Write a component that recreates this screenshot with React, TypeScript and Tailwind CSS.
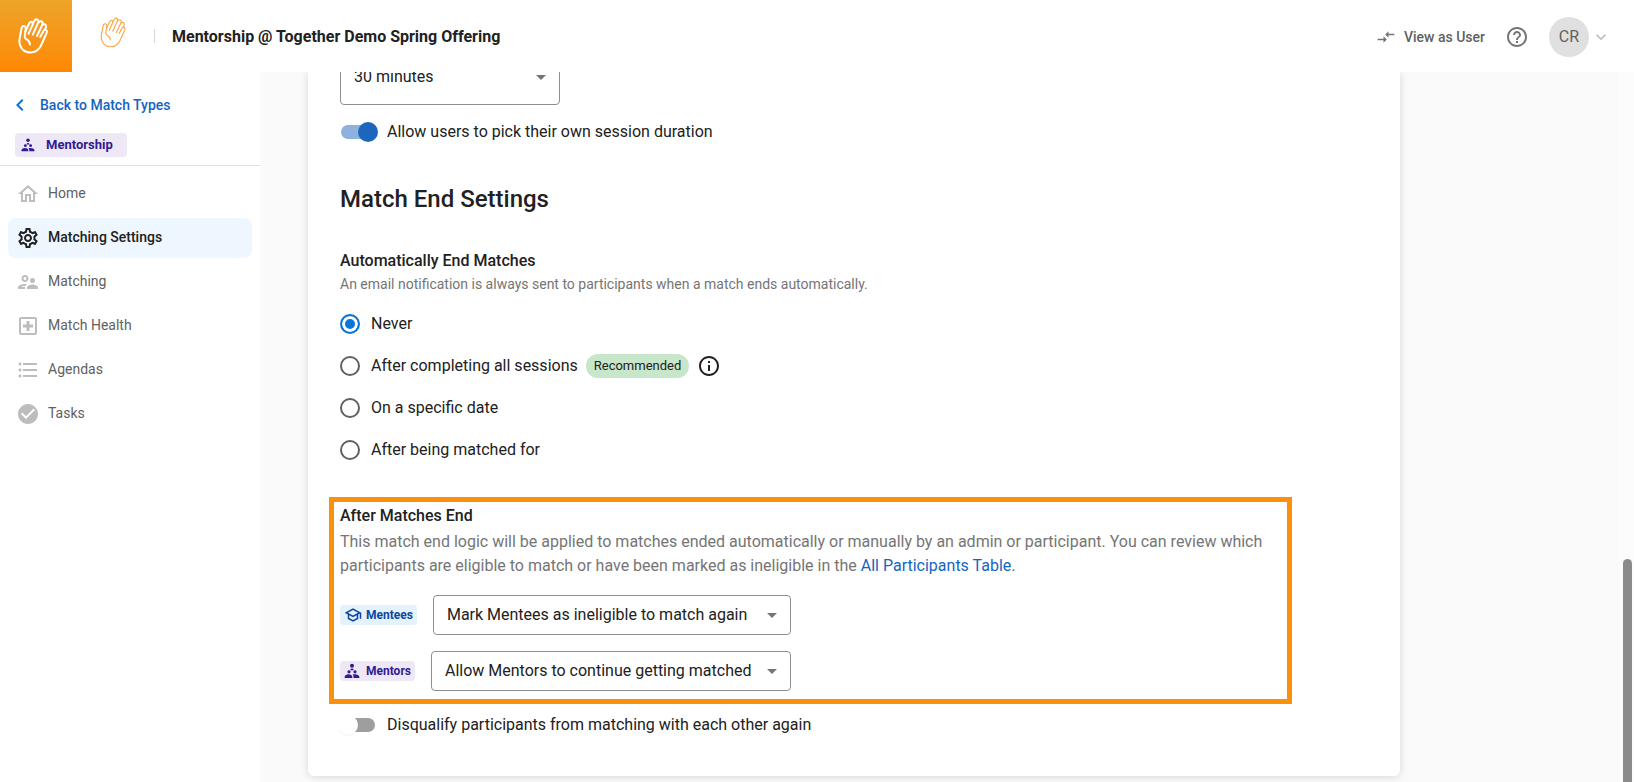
import React from "react";
import {
    MdArrowDropDown,
    MdCheckCircle,
    MdChevronLeft,
    MdCompareArrows,
    MdFormatListBulleted,
    MdHelpOutline,
    MdInfoOutline,
    MdKeyboardArrowDown,
    MdOutlineHome,
    MdOutlineLocalHospital,
    MdOutlineSchool,
    MdOutlineSettings,
    MdOutlineSupervisorAccount,
} from "react-icons/md";

const NAV = [
    { label: "Home", icon: MdOutlineHome },
    { label: "Matching Settings", icon: MdOutlineSettings, active: true },
    { label: "Matching", icon: MdOutlineSupervisorAccount },
    { label: "Match Health", icon: MdOutlineLocalHospital },
    { label: "Agendas", icon: MdFormatListBulleted },
    { label: "Tasks", icon: MdCheckCircle },
];

function HandIcon({ className, stroke }: { className: string; stroke: number }) {
    return (
        <svg
            viewBox="0 0 30 36"
            className={className}
            fill="none"
            stroke="currentColor"
            strokeWidth={stroke}
            strokeLinecap="round"
            strokeLinejoin="round"
        >
            <path d="M12 26.500C11.700 23.800 10.300 22.200 8.300 21.200C7 20.500 6.600 19.600 6.800 18.200L7.700 10.600C7.800 8.800 7.100 7.900 5.900 7.900C4.700 7.900 3.900 8.700 3.600 10.200L1.700 20C.2 28 4.600 34.300 12 34.500C17 34.600 20.800 32 23 27.500L28.600 15C29.200 13.500 28.900 12.400 27.900 12C26.900 11.600 25.900 12 25.300 13.200L22.300 18.800" />
            <path d="M7.500 13.500L11.300 5.200C11.900 4 12.900 3.600 13.900 4C14.900 4.500 15.200 5.400 14.700 6.600L10.500 15.800" />
            <path d="M14.700 5.800L16.400 2.800C17.100 1.500 18.300 1.100 19.400 1.600C20.500 2.100 20.800 3.200 20.200 4.500L14.800 16.600" />
            <path d="M20.400 4.600C21.400 3.400 22.700 3 23.700 3.500C24.800 4.100 25 5.200 24.400 6.500L19 18" />
            <path d="M24.600 6.600C25.800 6 27 6.100 27.700 6.900C28.300 7.600 28.300 8.500 27.900 9.500L26.600 12" />
        </svg>
    );
}

function MentorIcon({ className }: { className: string }) {
    return (
        <svg viewBox="0 0 24 24" className={className} fill="currentColor">
            <circle cx="12" cy="4" r="3" />
            <circle cx="7.500" cy="13.200" r="2.400" />
            <circle cx="16.500" cy="13.200" r="2.400" />
            <path d="M9.500 11c0-1.600 1-2.600 2.500-2.600s2.500 1 2.500 2.600z" />
            <path d="M1 22.500v-1.500c0-2.500 3-4 5.800-4s5.700 1.500 5.700 4v1.500z" />
            <path d="M14.300 22.500v-1.500c0-1.500-.6-2.700-1.500-3.600.9-.3 2.300-.4 3.500-.4 3 0 6.700 1.500 6.700 4v1.500z" />
        </svg>
    );
}

function Header() {
    return (
        <header className="flex h-[72px] shrink-0 items-center bg-white pr-[23px]">
            <a
                href="#"
                aria-label="Together"
                className="flex size-[72px] items-center justify-center bg-linear-to-b from-[#eca427] to-[#ff8800] pr-1.5 text-white"
            >
                <HandIcon className="h-9 w-[30px]" stroke={2} />
            </a>
            <HandIcon className="mb-2 ml-7 h-[31px] w-[26px] text-[#f9a545]" stroke={1.3} />
            <div className="ml-7 h-3.5 w-px bg-[#d9d9d9]" />
            <h1 className="ml-[17px] pt-0.5 text-base font-bold">Mentorship @ Together Demo Spring Offering</h1>

            <div className="ml-auto flex items-center pt-0.5 text-[#616161]">
                <button className="flex items-center gap-2 text-sm font-medium">
                    <MdCompareArrows className="size-5 text-[#757575]" />
                    View as User
                </button>
                <button aria-label="Help" className="ml-5 text-[#757575]">
                    <MdHelpOutline className="size-6" />
                </button>
                <button className="ml-5 flex items-center gap-0.5">
                    <span className="flex size-10 items-center justify-center rounded-full bg-[#e0e0e0]">CR</span>
                    <MdKeyboardArrowDown className="size-5 text-[#bdbdbd]" />
                </button>
            </div>
        </header>
    );
}

function Sidebar() {
    return (
        <aside className="w-[260px] shrink-0 bg-white">
            <div className="flex h-[94px] flex-col items-start border-b border-[#e0e0e0] pt-[21px]">
                <a href="#" className="flex items-center gap-2 pl-2 text-sm font-medium text-[#1565c0]">
                    <MdChevronLeft className="size-6 text-[#0876d8]" />
                    Back to Match Types
                </a>
                <div className="mt-4 ml-[15px] flex h-6 items-center gap-[11px] rounded-sm bg-[#ede7f6] px-1.5 pr-3.5 text-[13px] font-bold text-[#311b92]">
                    <MentorIcon className="size-3.5" />
                    Mentorship
                </div>
            </div>
            <nav className="flex flex-col gap-1 px-2 pt-2 text-sm text-[#616161]">
                {NAV.map(({ label, icon: Icon, active }) => (
                    <a
                        key={label}
                        href="#"
                        className={
                            active
                                ? "flex h-10 items-center gap-2 rounded-lg bg-[#eef7ff] px-2 font-medium text-[#212121]"
                                : "flex h-10 items-center gap-2 rounded-lg px-2"
                        }
                    >
                        <Icon className={active ? "size-6" : "size-6 text-[#bdbdbd]"} />
                        <span className="pb-0.5">{label}</span>
                    </a>
                ))}
            </nav>
        </aside>
    );
}

type SelectProps = {
    label: string;
    value: string;
    className: string;
};

function Select({ label, value, className }: SelectProps) {
    return (
        <div className={`relative ${className}`}>
            <select
                aria-label={label}
                className="h-full w-full appearance-none rounded-sm border border-[#8e8e8e] bg-white pr-8 pl-[13px]"
            >
                <option>{value}</option>
            </select>
            <MdArrowDropDown className="pointer-events-none absolute inset-y-0 right-[7px] my-auto size-6 text-[#757575]" />
        </div>
    );
}

function Toggle({ label, checked }: { label: string; checked?: boolean }) {
    return (
        <label className="flex h-6 items-center gap-2">
            <span className="relative flex h-5 w-[39px] items-center">
                <input
                    type="checkbox"
                    role="switch"
                    defaultChecked={checked}
                    className="peer ml-px h-3.5 w-[34px] appearance-none rounded-full bg-[#9e9e9e] checked:bg-[#8fb1de]"
                />
                <span className="pointer-events-none absolute -left-0.5 size-5 rounded-full bg-white shadow-2xs peer-checked:left-[18px] peer-checked:bg-[#1c67bd] peer-checked:shadow-none" />
            </span>
            {label}
        </label>
    );
}

function Radio({ label, checked, children }: { label: string; checked?: boolean; children?: React.ReactNode }) {
    return (
        <div className="flex h-[42px] items-center">
            <label className="flex items-center gap-[11px]">
                <input
                    type="radio"
                    name="match-end"
                    defaultChecked={checked}
                    className="size-5 appearance-none rounded-full border-2 border-[#616161] bg-white checked:border-[#0876d8] checked:bg-[#0876d8] checked:shadow-[inset_0_0_0_3px_white]"
                />
                {label}
            </label>
            {children}
        </div>
    );
}

function MatchSettings() {
    return (
        <section className="max-w-[1092px] grow rounded-b-md bg-white px-8 pb-[39px] shadow-[0_1px_8px_rgba(0,0,0,0.14)]">
            {/* scrolled under the header */}
            <Select label="Session duration" value="30 minutes" className="-mt-6 h-[57px] w-[220px]" />
            <div className="mt-[15px]">
                <Toggle label="Allow users to pick their own session duration" checked />
            </div>

            <h2 className="mt-[39px] text-2xl font-medium">Match End Settings</h2>

            <h3 className="mt-[35px] leading-[22px] font-medium">Automatically End Matches</h3>
            <p className="text-sm leading-6 text-[#757575]">
                An email notification is always sent to participants when a match ends automatically.
            </p>
            <div className="mt-[7px]">
                <Radio label="Never" checked />
                <Radio label="After completing all sessions">
                    <span className="ml-2 flex h-6 items-center rounded-full bg-[#c8e6c9] px-2 text-[13px]">
                        Recommended
                    </span>
                    <MdInfoOutline className="ml-2 size-6" />
                </Radio>
                <Radio label="On a specific date" />
                <Radio label="After being matched for" />
            </div>

            <div className="mt-[26px] -ml-[11px] max-w-[963px] border-5 border-[#fb900a] px-1.5 pt-0.5 pb-2">
                <h3 className="font-medium">After Matches End</h3>
                <p className="mt-0.5 text-[#757575]">
                    This match end logic will be applied to matches ended automatically or manually by an admin or
                    participant. You can review which participants are eligible to match or have been marked as
                    ineligible in the{" "}
                    <a href="#" className="text-[#1565c0]">
                        All Participants Table.
                    </a>
                </p>
                <div className="mt-[17px] flex w-[451px] flex-col gap-4">
                    <div className="flex items-center gap-4">
                        <span className="flex h-5 items-center gap-1 rounded-sm bg-[#e3f2fd] px-1 text-xs font-bold text-[#0d47a1]">
                            <MdOutlineSchool className="size-[18px]" />
                            Mentees
                        </span>
                        <Select
                            label="Mentees"
                            value="Mark Mentees as ineligible to match again"
                            className="h-10 grow"
                        />
                    </div>
                    <div className="flex items-center gap-4">
                        <span className="flex h-5 items-center gap-1 rounded-sm bg-[#ede7f6] px-1 text-xs font-bold text-[#311b92]">
                            <MentorIcon className="size-4" />
                            <span className="pl-0.5">Mentors</span>
                        </span>
                        <Select
                            label="Mentors"
                            value="Allow Mentors to continue getting matched"
                            className="h-10 grow"
                        />
                    </div>
                </div>
            </div>
            <div className="mt-[9px]">
                <Toggle label="Disqualify participants from matching with each other again" />
            </div>
        </section>
    );
}

export default function App() {
    return (
        <div className="flex h-screen flex-col overflow-hidden bg-[#fafafa] font-[Roboto,sans-serif] text-base text-[#212121]">
            <Header />
            <div className="flex min-h-0 grow">
                <Sidebar />
                <main className="flex grow items-start overflow-hidden pl-12">
                    <MatchSettings />
                </main>
                <div className="flex w-[15px] shrink-0 flex-col justify-end bg-[#fcfcfc] pr-0.5 pl-1">
                    <div className="h-[223px] rounded-t-full bg-[#8b8b8b]" />
                </div>
            </div>
        </div>
    );
}
